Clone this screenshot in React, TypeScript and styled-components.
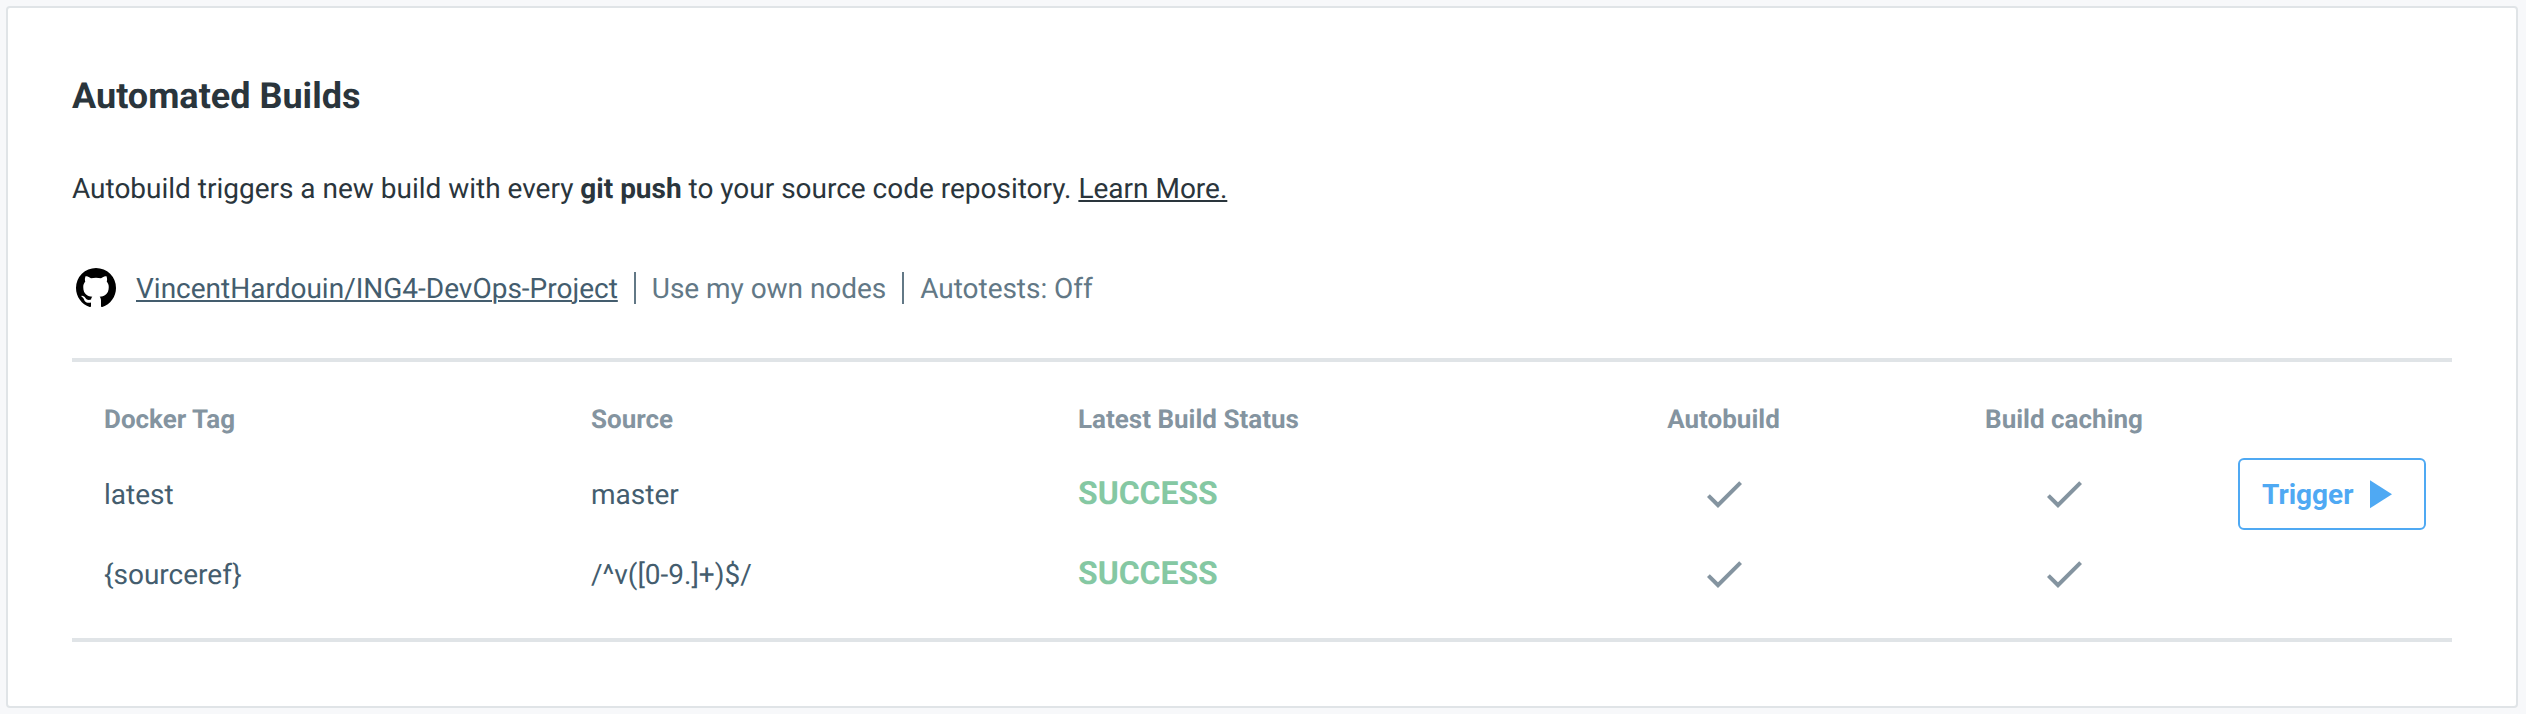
import React from "react";
import styled, { createGlobalStyle } from "styled-components";

const GlobalStyle = createGlobalStyle`
  * { box-sizing: border-box; }
  body {
    margin: 0;
    background: #f7f8fa;
    font-family: Roboto, sans-serif;
    font-size: 28px;
    line-height: 40px;
    color: #2a353c;
    text-rendering: geometricPrecision;
  }
`;

const Page = styled.main`
  height: 714px;
  padding: 6px 8px 6px 6px;
`;

const Card = styled.section`
  height: 702px;
  padding: 64px;
  background: #fff;
  border: 2px solid #e0e4e7;
  border-radius: 4px;
`;

const Title = styled.h2`
  margin: 0;
  font-size: 36px;
  line-height: 48px;
  font-weight: 700;
`;

const Intro = styled.p`
  margin: 49px 0 0;
  letter-spacing: -0.01px;
`;

const Link = styled.a<{ $tone: string }>`
  color: ${(p) => p.$tone};
  letter-spacing: 0;
  text-decoration: underline;
  text-decoration-thickness: 2px;
  text-underline-offset: 2px;
`;

const SourceBar = styled.div`
  display: flex;
  align-items: center;
  height: 48px;
  margin-top: 55px;
  color: #627886;
  letter-spacing: -0.04px;
`;

const SourceItem = styled.span`
  padding-top: 2px;
`;

const Icon = styled.svg`
  display: block;
  flex: none;
  width: 48px;
  height: 48px;
  fill: currentColor;
`;

const RepoIcon = styled(Icon)`
  margin-right: 16px;
  color: #000;
`;

const Separator = styled.span`
  width: 2px;
  height: 32px;
  margin: 0 16px;
  background: #627886;
`;

const Table = styled.div`
  margin-top: 46px;
  padding: 20px 26px 24px 32px;
  border-top: 4px solid #e0e4e7;
  border-bottom: 4px solid #e0e4e7;
`;

const Row = styled.div<{ $head?: boolean }>`
  display: grid;
  grid-template-columns: 487px 487px 475px 341px 340px 1fr;
  align-items: center;
  height: ${(p) => (p.$head ? 72 : 80)}px;
  padding-top: ${(p) => (p.$head ? 2 : 0)}px;
  color: ${(p) => (p.$head ? "#8494a0" : "#445d6e")};
  font-size: ${(p) => (p.$head ? 26 : 28)}px;
  font-weight: ${(p) => (p.$head ? 700 : 400)};
`;

const Cell = styled.div<{ $center?: boolean }>`
  display: flex;
  padding-top: 2px;
  justify-content: ${(p) => (p.$center ? "center" : "flex-start")};
`;

const StatusCell = styled(Cell)`
  padding: 0 0 2px;
  font-size: 32px;
  font-weight: 700;
  letter-spacing: -0.05px;
  color: #85c8a3;
`;

const IconCell = styled(Cell)`
  padding: 0;
  color: #8494a0;
`;

const TriggerButton = styled.button`
  display: flex;
  align-items: center;
  justify-content: space-between;
  justify-self: end;
  width: 188px;
  height: 72px;
  padding: 0 22px;
  border: 2px solid #4fa9f3;
  border-radius: 6px;
  background: #fff;
  color: #4fa9f3;
  font: 700 28px/40px Roboto, sans-serif;
`;

const TriggerLabel = styled.span`
  padding-top: 2px;
`;

const CHECK = "M21,7L9,19L3.5,13.5L4.91,12.09L9,16.17L19.59,5.59L21,7Z";
const PLAY = "M8,5.14V19.14L19,12.14L8,5.14Z";
const GITHUB =
  "M12,2A10,10 0 0,0 2,12C2,16.42 4.87,20.17 8.84,21.5C9.34,21.58 9.5,21.27 9.5,21C9.5,20.77 9.5,20.14 9.5,19.31C6.73,19.91 6.14,17.97 6.14,17.97C5.68,16.81 5.03,16.5 5.03,16.5C4.12,15.88 5.1,15.9 5.1,15.9C6.1,15.97 6.63,16.93 6.63,16.93C7.5,18.45 8.97,18 9.54,17.76C9.63,17.11 9.89,16.67 10.17,16.42C7.95,16.17 5.62,15.31 5.62,11.5C5.62,10.39 6,9.5 6.65,8.79C6.55,8.54 6.2,7.5 6.75,6.15C6.75,6.15 7.59,5.88 9.5,7.17C10.29,6.95 11.15,6.84 12,6.84C12.85,6.84 13.71,6.95 14.5,7.17C16.41,5.88 17.25,6.15 17.25,6.15C17.8,7.5 17.45,8.54 17.35,8.79C18,9.5 18.38,10.39 18.38,11.5C18.38,15.32 16.04,16.16 13.81,16.41C14.17,16.72 14.5,17.33 14.5,18.26C14.5,19.6 14.5,20.68 14.5,21C14.5,21.27 14.66,21.59 15.17,21.5C19.14,20.16 22,16.42 22,12A10,10 0 0,0 12,2Z";

const builds = [
  { tag: "latest", source: "master", status: "SUCCESS", trigger: true },
  { tag: "{sourceref}", source: "/^v([0-9.]+)$/", status: "SUCCESS", trigger: false },
];

export default function App() {
  return (
    <Page>
      <GlobalStyle />
      <Card>
        <Title>Automated Builds</Title>
        <Intro>
          Autobuild triggers a new build with every <strong>git push</strong> to your source code
          repository. <Link $tone="#2a353c">Learn More.</Link>
        </Intro>
        <SourceBar>
          <RepoIcon viewBox="0 0 24 24"><path d={GITHUB} /></RepoIcon>
          <SourceItem><Link $tone="#445d6e">VincentHardouin/ING4-DevOps-Project</Link></SourceItem>
          <Separator />
          <SourceItem>Use my own nodes</SourceItem>
          <Separator />
          <SourceItem>Autotests: Off</SourceItem>
        </SourceBar>
        <Table>
          <Row $head>
            <Cell>Docker Tag</Cell>
            <Cell>Source</Cell>
            <Cell>Latest Build Status</Cell>
            <Cell $center>Autobuild</Cell>
            <Cell $center>Build caching</Cell>
          </Row>
          {builds.map((b) => (
            <Row key={b.tag}>
              <Cell>{b.tag}</Cell>
              <Cell>{b.source}</Cell>
              <StatusCell>{b.status}</StatusCell>
              <IconCell $center><Icon viewBox="0 0 24 24"><path d={CHECK} /></Icon></IconCell>
              <IconCell $center><Icon viewBox="0 0 24 24"><path d={CHECK} /></Icon></IconCell>
              {b.trigger && (
                <TriggerButton>
                  <TriggerLabel>Trigger</TriggerLabel>
                  <Icon viewBox="0 0 24 24"><path d={PLAY} /></Icon>
                </TriggerButton>
              )}
            </Row>
          ))}
        </Table>
      </Card>
    </Page>
  );
}
